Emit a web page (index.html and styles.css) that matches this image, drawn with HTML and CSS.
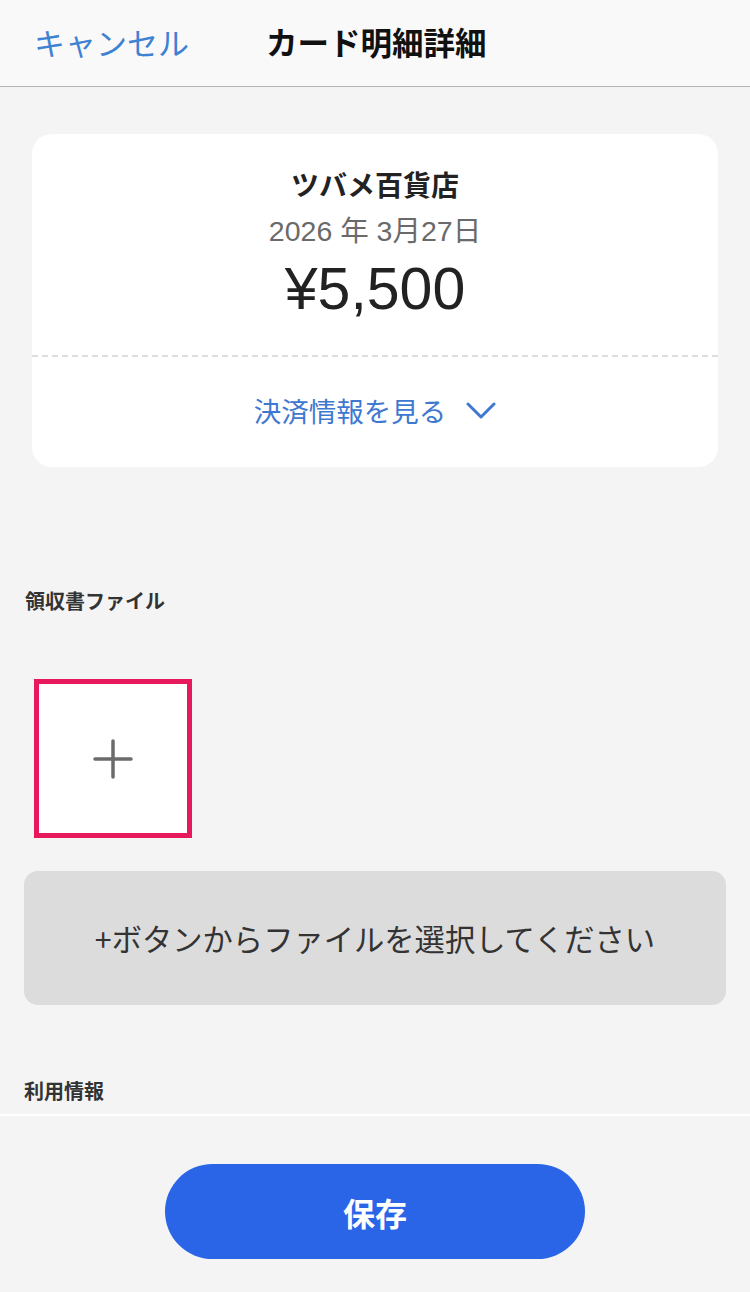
FILE: index.html
```html
<!DOCTYPE html>
<html lang="ja">
<head>
<meta charset="utf-8">
<link rel="stylesheet" href="styles.css">
</head>
<body>
<div class="screen">
  <header class="nav">
    <span class="cancel">キャンセル</span>
    <span class="title">カード明細詳細</span>
  </header>
  <main class="content">
    <section class="card">
      <div class="card-top">
        <div class="shop">ツバメ百貨店</div>
        <div class="date">2026 年 3月27日</div>
        <div class="amount">¥5,500</div>
      </div>
      <div class="card-bottom">
        <span class="more">決済情報を見る</span>
        <svg class="chev" width="30" height="20" viewBox="0 0 30 20"><path d="M2 3 L15 16 L28 3" fill="none" stroke="#3f78d0" stroke-width="3" stroke-linecap="round" stroke-linejoin="round"/></svg>
      </div>
    </section>
    <h2 class="label label-receipt">領収書ファイル</h2>
    <div class="add-box">
      <svg width="40" height="40" viewBox="0 0 40 40"><path d="M20 2 V38 M2 20 H38" stroke="#6b6b6b" stroke-width="3.5" stroke-linecap="round"/></svg>
    </div>
    <div class="hint">+ボタンからファイルを選択してください</div>
    <h2 class="label label-usage">利用情報</h2>
  </main>
  <footer class="footer">
    <button class="save">保存</button>
  </footer>
</div>
</body>
</html>
```
FILE: styles.css
```css
* { box-sizing: border-box; }
html, body { margin: 0; padding: 0; }
body {
  width: 750px;
  height: 1292px;
  background: #f5f4f5;
  font-family: "Noto Sans CJK JP", "Noto Sans", sans-serif;
  overflow: hidden;
}
.screen { display: flex; flex-direction: column; height: 1292px; }
.nav {
  height: 87px;
  background: #f9f9f9;
  border-bottom: 1px solid #b4b4b4;
  display: flex;
  align-items: center;
  padding: 0 0 4px 34px;
  gap: 77px;
}
.cancel { font-size: 31px; color: #3e82d2; }
.title { font-size: 31.5px; font-weight: 700; color: #111; }
.content { flex: 1; padding: 47px 24px 0 24px; }
.card {
  margin: 0 8px;
  background: #fff;
  border-radius: 20px;
  overflow: hidden;
}
.card-top {
  display: flex; flex-direction: column; align-items: center;
  padding: 28px 0 30px;
  border-bottom: 2px dashed #dedede;
}
.shop { font-size: 28px; font-weight: 700; color: #222; line-height: 44px; }
.date { font-family: "Liberation Sans", "Noto Sans CJK JP", sans-serif; font-size: 28.5px; color: #6a6a6a; line-height: 44px; margin-top: 3px; }
.amount { font-family: "Liberation Sans", "Noto Sans CJK JP", sans-serif; font-size: 59px; color: #222; line-height: 72px; }
.card-bottom {
  height: 110px;
  display: flex; align-items: center; justify-content: center; gap: 20px;
  padding-bottom: 4px;
}
.more { font-size: 27.5px; color: #3f78d0; }
.chev { margin-top: 2px; }
.label { margin: 0; font-size: 20px; font-weight: 700; color: #333; line-height: 28px; }
.label-receipt { margin-top: 120px; padding-left: 1px; }
.add-box {
  margin-top: 64px;
  margin-left: 10px;
  width: 158px; height: 159px;
  background: #fff;
  border: 5px solid #e8185c;
  display: flex; align-items: center; justify-content: center;
}
.hint {
  margin-top: 33px;
  height: 134px;
  background: #dcdcdc;
  border-radius: 14px;
  display: flex; align-items: center; justify-content: center;
  font-size: 30.3px; color: #333;
}
.label-usage { margin-top: 72px; }
.footer {
  height: 178px;
  border-top: 2px solid #ffffff;
  display: flex; justify-content: center;
  padding-top: 48px;
}
.save {
  width: 420px; height: 95px;
  border: none; border-radius: 48px;
  background: #2a65e8;
  color: #fff;
  font-family: "Noto Sans CJK JP", sans-serif;
  font-size: 32px; font-weight: 700;
}
```
